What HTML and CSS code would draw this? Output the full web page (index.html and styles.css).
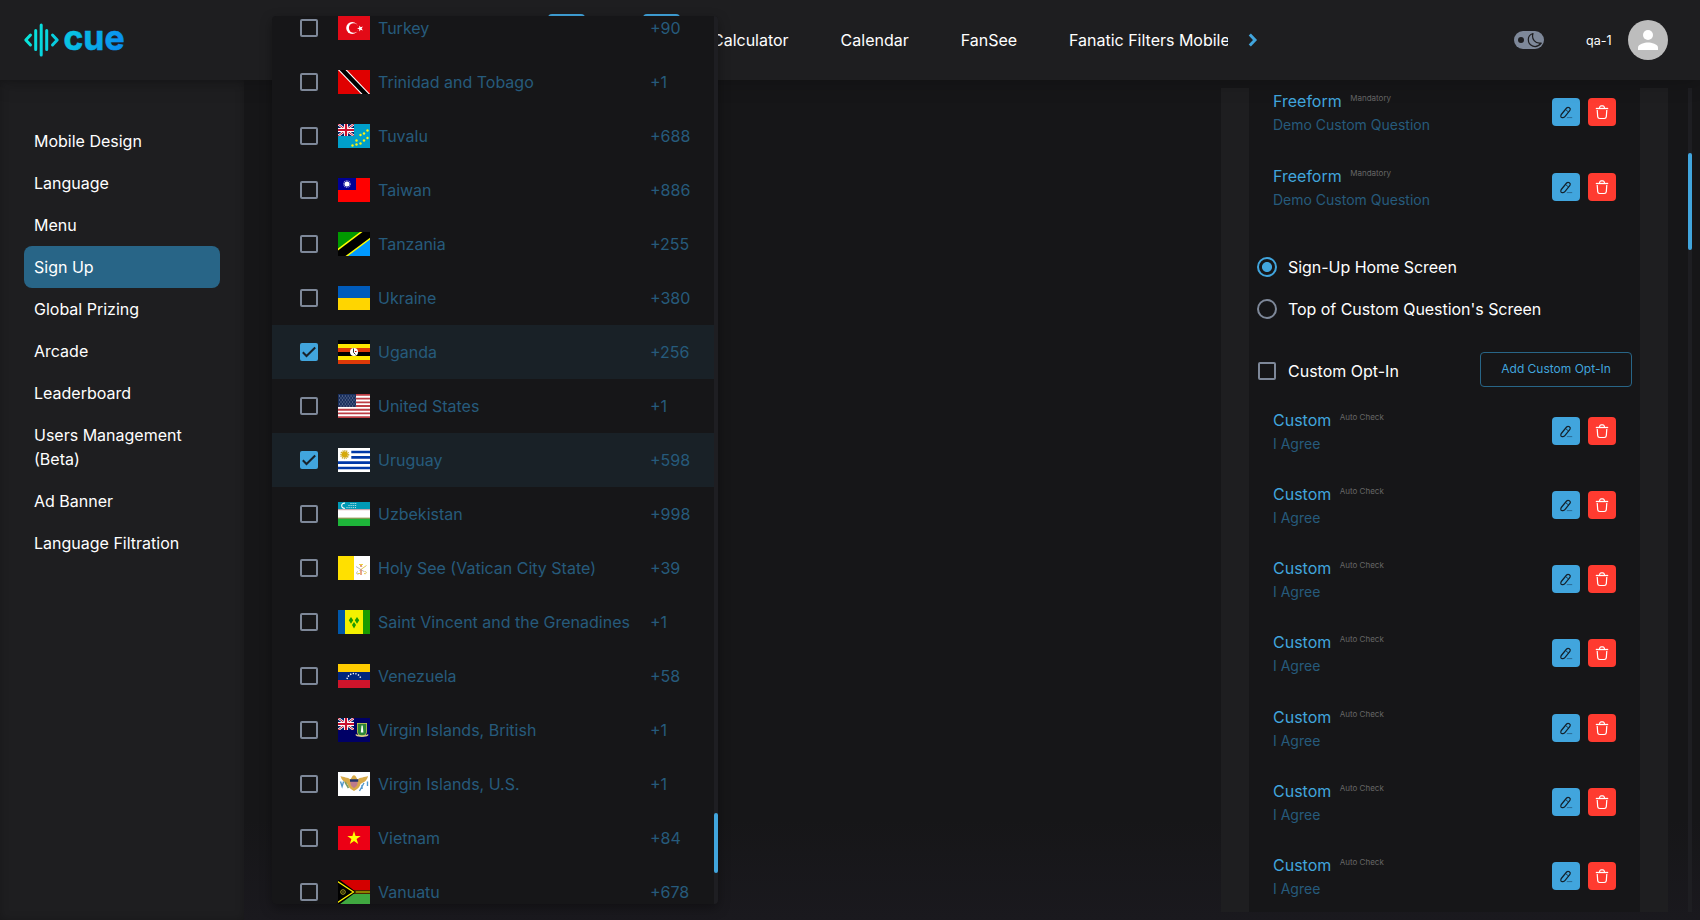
FILE: index.html
```html
<!DOCTYPE html>
<html lang="en">
<head>
<meta charset="utf-8">
<title>Cue - Sign Up</title>
<link rel="stylesheet" href="styles.css">
</head>
<body>
<svg class="defs" width="0" height="0" aria-hidden="true">
  <symbol id="pen" viewBox="0 0 28 28">
    <path d="M9.300 16.500 14.600 10c1.700-1.800 4.700.4 3.300 2.500l-5 6.200c-.7.9-3.200 1.200-3.700.7-.5-.4-.5-2.200.1-2.900Z" fill="none" stroke="#14212b" stroke-width="1.200"/>
    <path d="m13.600 11.600 2.800 2.300" fill="none" stroke="#14212b" stroke-width=".8"/>
    <path d="M14.800 19.600h5.400" stroke="#2c6c96" stroke-width="1" fill="none"/>
  </symbol>
  <symbol id="bin" viewBox="0 0 28 28">
    <path d="M7.800 10.500h12.400" fill="none" stroke="#fff" stroke-width="1.300"/>
    <path d="M11.500 10c.2-1.700.5-2.200 1.400-2.200h2.200c.9 0 1.200.5 1.400 2.200M9.200 12l.5 6.600c.1 1.300.8 1.900 2 1.900h4.600c1.200 0 1.900-.6 2-1.900l.5-6.600" fill="none" stroke="#fff" stroke-width="1.200"/>
  </symbol>
  <symbol id="jack" viewBox="0 0 16 12">
    <path fill="#012169" d="M0 0h16v12H0z"/>
    <path stroke="#fff" stroke-width="2.400" d="m0 0 16 12M16 0 0 12"/>
    <path stroke="#c8102e" stroke-width="1" d="m0 0 16 12M16 0 0 12"/>
    <path stroke="#fff" stroke-width="4" d="M8 0v12M0 6h16"/>
    <path stroke="#c8102e" stroke-width="2.200" d="M8 0v12M0 6h16"/>
  </symbol>
</svg>

<header class="topbar">
  <svg class="logo" viewBox="0 0 104 56" width="104" height="56">
    <defs><linearGradient id="cue" x1="0" y1="8" x2="104" y2="44" gradientUnits="userSpaceOnUse"><stop offset="0" stop-color="#08ecd8"/><stop offset=".5" stop-color="#08bde4"/><stop offset="1" stop-color="#0b84f3"/></linearGradient></defs>
    <g fill="none" stroke="url(#cue)" stroke-width="3" stroke-linecap="round" stroke-linejoin="round">
      <path d="M6.500 23 1.800 28l4.700 5M28.500 23l4.700 5-4.700 5"/>
      <path d="M11.700 18.500v19M17.200 13v30M22.700 18.500v19"/>
    </g>
    <text class="wordmark" x="39.500" y="37.800" textLength="61" lengthAdjust="spacingAndGlyphs" fill="url(#cue)" stroke="url(#cue)" stroke-width=".6">cue</text>
  </svg>
  <nav class="topnav">
    <a>Calculator</a><a>Calendar</a><a>FanSee</a><a>Fanatic Filters Mobile</a>
  </nav>
  <svg class="next" width="10" height="14" viewBox="0 0 10 14"><path d="m1.800 1.500 5.200 5.500-5.200 5.500" fill="none" stroke="#41a5dd" stroke-width="3"/></svg>
  <div class="account">
    <span class="theme"><i></i>
      <svg width="16" height="16" viewBox="0 0 16 16"><path d="M6 1.500C4.300 6.800 8 12.200 14.300 11 9 17.500 1.300 14 1.300 7.600 1.300 4.700 3.200 2.300 6 1.500Z" fill="none" stroke="#1e1e20" stroke-width="1.200" stroke-linejoin="round"/></svg>
    </span>
    <span class="user">qa-1</span>
    <svg class="avatar" width="40" height="40" viewBox="0 0 40 40"><circle cx="20" cy="20" r="20" fill="#bdbdbd"/><circle cx="20" cy="15" r="5" fill="#fff"/><path d="M10 30v-2.500c0-3.300 6.700-5 10-5s10 1.700 10 5V30z" fill="#fff"/></svg>
  </div>
</header>

<div class="body">
  <aside class="sidebar">
    <a>Mobile Design</a><a>Language</a><a>Menu</a><a class="active">Sign Up</a><a>Global Prizing</a><a>Arcade</a><a>Leaderboard</a><a>Users Management (Beta)</a><a>Ad Banner</a><a>Language Filtration</a>
  </aside>
  <main class="content">
    <section class="panel">
      <div class="panel-inner">
        <article class="entry first"><div class="info"><h3>Freeform <small>Mandatory</small></h3><p>Demo Custom Question</p></div><button class="edit"><svg><use href="#pen"/></svg></button><button class="del"><svg><use href="#bin"/></svg></button></article>
        <article class="entry"><div class="info"><h3>Freeform <small>Mandatory</small></h3><p>Demo Custom Question</p></div><button class="edit"><svg><use href="#pen"/></svg></button><button class="del"><svg><use href="#bin"/></svg></button></article>
        <div class="choices">
          <label><span class="radio on"></span>Sign-Up Home Screen</label>
          <label><span class="radio"></span>Top of Custom Question's Screen</label>
        </div>
        <div class="optin"><label><span class="box"></span>Custom Opt-In</label><button class="add">Add Custom Opt-In</button></div>
        <article class="entry"><div class="info"><h3>Custom <small>Auto Check</small></h3><p>I Agree</p></div><button class="edit"><svg><use href="#pen"/></svg></button><button class="del"><svg><use href="#bin"/></svg></button></article>
        <article class="entry"><div class="info"><h3>Custom <small>Auto Check</small></h3><p>I Agree</p></div><button class="edit"><svg><use href="#pen"/></svg></button><button class="del"><svg><use href="#bin"/></svg></button></article>
        <article class="entry"><div class="info"><h3>Custom <small>Auto Check</small></h3><p>I Agree</p></div><button class="edit"><svg><use href="#pen"/></svg></button><button class="del"><svg><use href="#bin"/></svg></button></article>
        <article class="entry"><div class="info"><h3>Custom <small>Auto Check</small></h3><p>I Agree</p></div><button class="edit"><svg><use href="#pen"/></svg></button><button class="del"><svg><use href="#bin"/></svg></button></article>
        <article class="entry"><div class="info"><h3>Custom <small>Auto Check</small></h3><p>I Agree</p></div><button class="edit"><svg><use href="#pen"/></svg></button><button class="del"><svg><use href="#bin"/></svg></button></article>
        <article class="entry"><div class="info"><h3>Custom <small>Auto Check</small></h3><p>I Agree</p></div><button class="edit"><svg><use href="#pen"/></svg></button><button class="del"><svg><use href="#bin"/></svg></button></article>
        <article class="entry"><div class="info"><h3>Custom <small>Auto Check</small></h3><p>I Agree</p></div><button class="edit"><svg><use href="#pen"/></svg></button><button class="del"><svg><use href="#bin"/></svg></button></article>
      </div>
    </section>
    <div class="track page-track"><span></span></div>
  </main>
</div>

<div class="tab-edges"><i></i><i></i></div>
<div class="menu">
  <ul class="countries">
    <li><span class="box"></span><svg class="flag" viewBox="0 0 32 24"><path fill="#e30a17" d="M0 0h32v24H0z"/><circle cx="14.200" cy="12" r="6" fill="#fff"/><circle cx="15.700" cy="12" r="4.800" fill="#e30a17"/><path fill="#fff" d="m19 12.500 2.200-.8.100-2.300 1.400 1.800 2.200-.6-1.300 1.900 1.300 1.900-2.200-.6-1.400 1.800-.1-2.300z"/></svg><b>Turkey</b><em>+90</em></li>
    <li><span class="box"></span><svg class="flag" viewBox="0 0 32 24"><path fill="#e00000" d="M0 0h32v24H0z"/><path fill="#fff" d="M0 0h9l23 24h-9z"/><path fill="#000" d="M1.500 0h6l23 24h-6z"/></svg><b>Trinidad and Tobago</b><em>+1</em></li>
    <li><span class="box"></span><svg class="flag" viewBox="0 0 32 24"><path fill="#009fca" d="M0 0h32v24H0z"/><use href="#jack" width="16" height="12"/><g fill="#fff40d"><circle cx="29.500" cy="6.500" r="1.200"/><circle cx="26" cy="9.500" r="1.200"/><circle cx="22.500" cy="11" r="1.200"/><circle cx="29.500" cy="14" r="1.200"/><circle cx="26" cy="16.500" r="1.200"/><circle cx="18.500" cy="16.500" r="1.200"/><circle cx="22.500" cy="19.500" r="1.200"/><circle cx="18.500" cy="20.500" r="1.200"/><circle cx="14.500" cy="21.500" r="1.200"/></g></svg><b>Tuvalu</b><em>+688</em></li>
    <li><span class="box"></span><svg class="flag" viewBox="0 0 32 24"><path fill="#f00" d="M0 0h32v24H0z"/><path fill="#000095" d="M0 0h18v12H0z"/><circle cx="9" cy="6" r="3.300" fill="none" stroke="#8f8fd0" stroke-width="1.200" stroke-dasharray="1 .73"/><circle cx="9" cy="6" r="2.500" fill="#fff"/></svg><b>Taiwan</b><em>+886</em></li>
    <li><span class="box"></span><svg class="flag" viewBox="0 0 32 24"><path fill="#090" d="M0 0h32v24H0z"/><path fill="#09f" d="M32 0v24H0z"/><path stroke="#ff0" stroke-width="12" d="M-4 27 36-3"/><path stroke="#000" stroke-width="9" d="M-4 27 36-3"/></svg><b>Tanzania</b><em>+255</em></li>
    <li><span class="box"></span><svg class="flag" viewBox="0 0 32 24"><path fill="#005bbb" d="M0 0h32v12H0z"/><path fill="#ffd500" d="M0 12h32v12H0z"/></svg><b>Ukraine</b><em>+380</em></li>
    <li class="picked"><span class="box checked"><svg viewBox="0 0 18 18"><path d="m2.800 9.200 3.700 3.800 8.700-8.500" fill="none" stroke="#19222a" stroke-width="2"/></svg></span><svg class="flag" viewBox="0 0 32 24"><path d="M0 0h32v24H0z"/><path fill="#ffe700" d="M0 4h32v4H0zM0 16h32v4H0z"/><path fill="#de3908" d="M0 8h32v4H0zM0 20h32v4H0z"/><circle cx="16" cy="12" r="4" fill="#fff"/><path fill="none" stroke="#333" d="M15.500 8.500v4l2 2"/><path stroke="#d90000" d="M17 11.500h1.500"/></svg><b>Uganda</b><em>+256</em></li>
    <li><span class="box"></span><svg class="flag" viewBox="0 0 32 24"><path fill="#fff" d="M0 0h32v24H0z"/><path stroke="#bd3d44" stroke-width="1.850" d="M0 .9h32M0 4.600h32M0 8.300h32M0 12h32M0 15.700h32M0 19.400h32M0 23.100h32"/><path fill="#192f5d" d="M0 0h18v12.900H0z"/><path stroke="#9ba6bd" stroke-dasharray="1 1.900" d="M1 2h16M2.500 4h15M1 6h16M2.500 8h15M1 10h16M2.500 12h15" stroke-width=".9"/></svg><b>United States</b><em>+1</em></li>
    <li class="picked"><span class="box checked"><svg viewBox="0 0 18 18"><path d="m2.800 9.200 3.700 3.800 8.700-8.500" fill="none" stroke="#19222a" stroke-width="2"/></svg></span><svg class="flag" viewBox="0 0 32 24"><path fill="#fff" d="M0 0h32v24H0z"/><path stroke="#0038a8" stroke-width="2.670" d="M13.300 4H32M13.300 9.300H32M0 14.700h32M0 20h32"/><circle cx="6.700" cy="6.600" r="3.600" fill="none" stroke="#c9a92c" stroke-width="2" stroke-dasharray="1 .8"/><circle cx="6.700" cy="6.600" r="3" fill="#d5a90a"/></svg><b>Uruguay</b><em>+598</em></li>
    <li><span class="box"></span><svg class="flag" viewBox="0 0 32 24"><path fill="#fff" d="M0 0h32v24H0z"/><path fill="#0099b5" d="M0 0h32v7.300H0z"/><path fill="#1eb53a" d="M0 16.500h32V24H0z"/><path stroke="#ce9aa0" d="M0 7.700h32"/><path stroke="#7f8130" d="M0 16.200h32"/><path d="M7 1.200a2.600 2.600 0 1 0 0 5" fill="none" stroke="#fff" stroke-width="1.100"/><path stroke="#d8eff3" stroke-dasharray="1 1.100" d="M12.500 1.500H19M10.500 3.500H19M8.500 5.600H19"/></svg><b>Uzbekistan</b><em>+998</em></li>
    <li><span class="box"></span><svg class="flag" viewBox="0 0 32 24"><path fill="#ffe000" d="M0 0h16v24H0z"/><path fill="#fff" d="M16 0h16v24H16z"/><g fill="none"><path stroke="#e3c855" d="m28.500 9.500-7 5M22 8.500l2 2M26.500 15.500c3 0 2 3-.5 2"/><path stroke="#bbb" d="m18 10.500 8 5M20 15.500c-3 1-1 4 1 2"/><path stroke="#db7353" stroke-width="1.300" d="M23 8v3M23 13.500V19"/><path stroke="#ecd13d" d="M21 8.500h4M19.500 17.500h3"/></g></svg><b>Holy See (Vatican City State)</b><em>+39</em></li>
    <li><span class="box"></span><svg class="flag" viewBox="0 0 32 24"><path fill="#f4f100" d="M0 0h32v24H0z"/><path fill="#0057a9" d="M0 0h7v24H0z"/><path fill="#199a00" d="M25 0h7v24h-7z"/><path fill="#199a00" d="m13 7 2.200 3.200-2.200 3.500-2.200-3.500zM19 7l2.200 3.200-2.200 3.500-2.200-3.500zM16 12l2 3-2 3.500-2-3.500z"/></svg><b>Saint Vincent and the Grenadines</b><em>+1</em></li>
    <li><span class="box"></span><svg class="flag" viewBox="0 0 32 24"><path fill="#fc0" d="M0 0h32v8H0z"/><path fill="#00247d" d="M0 8h32v8H0z"/><path fill="#cf142b" d="M0 16h32v8H0z"/><path d="M9 15a7.200 7.200 0 0 1 14 0" fill="none" stroke="#fff" stroke-width="1.400" stroke-dasharray="1.300 1.400"/></svg><b>Venezuela</b><em>+58</em></li>
    <li><span class="box"></span><svg class="flag" viewBox="0 0 32 24"><path fill="#006" d="M0 0h32v24H0z"/><use href="#jack" width="16" height="12"/><path fill="#d8c95a" d="M19 5h10v8c0 4-3 5-5 6-2-1-5-2-5-6z"/><path fill="#2b8537" d="M19.700 5.700h8.600v7.500c0 3-2 4-4.300 5-2.300-1-4.300-2-4.300-5z"/><path fill="#fff" d="M23.500 7.500h1.200l.7 7h-2.600z"/><path fill="none" stroke="#e7d58c" stroke-width="1.600" d="M18 16.500c1 2 3.500 1.500 6 1.500s5 .5 6-1.500"/></svg><b>Virgin Islands, British</b><em>+1</em></li>
    <li><span class="box"></span><svg class="flag" viewBox="0 0 32 24"><path fill="#fff" d="M0 0h32v24H0z"/><path fill="#d8aa48" d="M2.500 4c3 1.500 7 1 10 3.500L14.500 4c1-1 2-1 3 0l2 3.500C22 5 27 5.500 30 4c-1 5-4 6-7.500 8-.5 3-3 5-6.500 7-3.500-2-6-4-6.500-7C6 10 3.500 8 2.500 4Z"/><path fill="#be7b8b" d="M12.500 9h7c.5 4-1 5.500-3.500 7-2.500-1.500-4-3-3.500-7Z"/><path fill="#24366c" d="M12 7.200h8.200v2.600H12z"/><path fill="none" stroke="#5297ca" stroke-width="1.400" d="m2.500 9.500 1.600 5 1.500-5M29.500 9.500V14M26 11l-4.500 8M24 13v4"/><path fill="none" stroke="#7b9b60" stroke-width="1.600" d="m7 10 3.500 6"/></svg><b>Virgin Islands, U.S.</b><em>+1</em></li>
    <li><span class="box"></span><svg class="flag" viewBox="0 0 32 24"><path fill="#ec0015" d="M0 0h32v24H0z"/><path fill="#ff0" d="m16 5 1.600 5h5.100l-4.100 3 1.600 5-4.200-3.100L11.800 18l1.600-5-4.100-3h5.100z"/></svg><b>Vietnam</b><em>+84</em></li>
    <li><span class="box"></span><svg class="flag" viewBox="0 0 32 24"><path fill="#d40000" d="M0 0h32v12H0z"/><path fill="#40a840" d="M0 12h32v12H0z"/><path stroke="#4f2500" stroke-width="4.200" d="M14 12h18"/><path stroke="#8b8200" stroke-width="2" d="M14 12h18"/><path d="M-1-1 16.500 12-1 25z" stroke="#000" stroke-width="2"/><path d="m-1 1 16.500 11L-1 23z" stroke="#fff000" stroke-width="1.300"/><circle cx="5" cy="12" r="2.300" fill="none" stroke="#a99e1a"/><circle cx="5" cy="12" r=".8" fill="#a99e1a"/></svg><b>Vanuatu</b><em>+678</em></li>
  </ul>
  <div class="track menu-track"><span></span></div>
</div>
</body>
</html>
```

FILE: styles.css
```css
* { box-sizing: border-box; }
body {
  margin: 0;
  width: 1700px;
  height: 920px;
  overflow: hidden;
  position: relative;
  display: flex;
  flex-direction: column;
  background: #161618;
  color: #fff;
  font: 400 16px/24px Inter, "Liberation Sans", sans-serif;
}
.defs { position: absolute; }
button { font: inherit; border: 0; padding: 0; }

/* Header */
.topbar {
  flex: none;
  height: 80px;
  padding: 0 32px 0 24px;
  display: flex;
  align-items: center;
  background: #1e1e20;
  box-shadow: 0 0 20px rgba(0, 0, 0, .28);
  z-index: 1;
}
.logo { overflow: visible; }
.wordmark { font: 700 35px Inter, "Liberation Sans", sans-serif; }
.topnav {
  width: 516px;
  margin-left: 584px;
  display: flex;
  gap: 52px;
  overflow: hidden;
  white-space: nowrap;
}
.topnav a { flex: none; letter-spacing: -.01px; }
.next { margin-left: 20px; }
.account { margin-left: auto; display: flex; align-items: center; }
.theme {
  width: 30px;
  height: 18px;
  border-radius: 9px;
  background: #7e8899;
  display: flex;
  align-items: center;
  padding-left: 4px;
  gap: 4px;
}
.theme i { flex: none; width: 6px; height: 6px; border-radius: 50%; background: #1e1e20; }
.theme svg { flex: none; margin-left: -1px; }
.user { width: 26px; margin: 2px 16px 0 42px; font-size: 12.500px; }

/* Page body */
.body { flex: 1; display: flex; min-height: 0; }
.sidebar {
  width: 244px;
  padding: 40px 24px 0;
  background: #1e1e20;
  box-shadow: inset 0 0 8px rgba(0, 0, 0, .22);
}
.sidebar a { display: block; padding: 9px 10px; border-radius: 8px; }
.sidebar .active { background: #286587; }
.content {
  flex: 1;
  display: flex;
  justify-content: flex-end;
  padding: 8px 8px 8px 0;
  background: linear-gradient(#161618 88%, #1a191e);
}
.panel { width: 447px; padding: 0 28px; background: #1e1e20; margin-right: 20px; }
.panel-inner { height: 100%; padding: 0 8px; background: #161618; overflow: hidden; }
.entry { height: 74.200px; padding: 0 16px; display: flex; gap: 8px; }
.entry.first { margin-top: -12.600px; }
.info { flex: 1; padding-top: 14px; }
.entry h3 { margin: 0; display: flex; gap: 8.500px; font: inherit; color: #41a5dd; }
.entry small { font-size: 8px; line-height: 18.500px; color: #666; }
.entry p { margin: 0; font-size: 14px; line-height: 24px; color: #265b7c; }
.edit, .del { flex: none; width: 28px; height: 28px; margin-top: 23px; border-radius: 4px; background: #41a5dd; }
.del { background: #ff3b30; }
.edit svg, .del svg { display: block; width: 28px; height: 28px; }
.choices { margin-top: 22.200px; }
.choices label { height: 42px; display: flex; align-items: center; gap: 11px; letter-spacing: -.04px; }
.radio { width: 20px; height: 20px; border: 2px solid #7e8899; border-radius: 50%; }
.radio.on { border-color: #41a5dd; background: radial-gradient(circle, #41a5dd 4.600px, transparent 5.400px); }
.optin { height: 41.800px; margin-top: 22px; display: flex; justify-content: space-between; align-items: flex-start; }
.optin label { display: flex; align-items: center; gap: 12px; margin: 7px 0 0 1px; }
.add {
  width: 152px;
  height: 35px;
  background: none;
  border: 1px solid #286587;
  border-radius: 4px;
  color: #41a5dd;
  font-size: 12px;
}
.box { flex: none; display: block; width: 18px; height: 18px; border: 2px solid #7e8899; border-radius: 2px; }
.box.checked { border: 0; background: #41a5dd; }
.box svg { display: block; }
.track { width: 4px; background: #1e1e22; }
.track span { display: block; border-radius: 2px; background: #41a5dd; }
.page-track span { height: 97px; margin-top: 65px; }

/* Country menu floating over the page */
.tab-edges { position: absolute; left: 548px; top: 14px; display: flex; gap: 59px; }
.tab-edges i { width: 37px; height: 10px; border-radius: 4px; background: #41a5dd; }
.tab-edges i + i { margin-left: -1px; }
.tab-edges, .menu { z-index: 2; }
.menu {
  position: absolute;
  left: 272px;
  top: 16px;
  width: 446px;
  height: 888px;
  display: flex;
  overflow: hidden;
  border-radius: 4px;
  background: #161618;
  box-shadow: 0 4px 12px rgba(0, 0, 0, .35);
}
.countries { flex: 1; margin: -15px 0 0; padding: 0; list-style: none; color: #265b7c; }
.countries li { height: 54px; padding-left: 28px; display: flex; align-items: center; }
.countries .picked { background: #192127; }
.flag { width: 32px; height: 24px; margin: 0 8px 0 20px; }
.countries b { width: 272px; font-weight: 400; }
.countries em { font-style: normal; }
.menu-track span { height: 60px; margin-top: 797px; }
```
